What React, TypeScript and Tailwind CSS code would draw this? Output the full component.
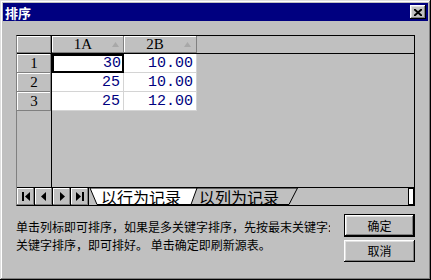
import React from "react";

const raised =
  "shadow-[inset_-1px_-1px_0_#808080,inset_1px_1px_0_#fff]";
const btnBevel =
  "shadow-[inset_-1px_-1px_0_#000,inset_1px_1px_0_#fff,inset_-2px_-2px_0_#808080,inset_2px_2px_0_#dfdfdf]";

const cjk = "font-['SimSun','Noto_Sans_CJK_SC',sans-serif]";

const rows = [
  { n: "1", a: "30", b: "10.00" },
  { n: "2", a: "25", b: "10.00" },
  { n: "3", a: "25", b: "12.00" },
];

const SortArrow = () => (
  <svg width="7" height="5" viewBox="0 0 7 5" className="shrink-0">
    <polygon points="3.5,0 7,5 0,5" fill="#a8a8a8" />
  </svg>
);

const NavIcon = ({ kind }: { kind: "first" | "prev" | "next" | "last" }) => (
  <svg width="8" height="9" viewBox="0 0 8 9">
    {kind === "first" && (
      <>
        <rect x="0" y="0" width="2" height="9" fill="#000" />
        <polygon points="8,0 8,9 3,4.5" fill="#000" />
      </>
    )}
    {kind === "prev" && <polygon points="6,0 6,9 1,4.5" fill="#000" />}
    {kind === "next" && <polygon points="2,0 2,9 7,4.5" fill="#000" />}
    {kind === "last" && (
      <>
        <polygon points="0,0 0,9 5,4.5" fill="#000" />
        <rect x="6" y="0" width="2" height="9" fill="#000" />
      </>
    )}
  </svg>
);

export default function App() {
  return (
    <div
      className={`w-[431px] h-[280px] bg-[#c0c0c0] p-[3px] flex flex-col ${cjk} shadow-[inset_-1px_-1px_0_#000,inset_1px_1px_0_#dfdfdf,inset_-2px_-2px_0_#808080,inset_2px_2px_0_#fff]`}
    >
      {/* Title bar */}
      <div className="h-[18px] bg-[#000080] flex items-center justify-between pl-[2px] pr-[2px]">
        <span className="text-white text-[13px] font-bold leading-none">排序</span>
        <button className={`w-[16px] h-[14px] bg-[#c0c0c0] flex items-center justify-center ${btnBevel}`}>
          <svg width="8" height="7" viewBox="0 0 8 7">
            <path d="M0 0 L8 7 M8 0 L0 7" stroke="#000" strokeWidth="2" />
          </svg>
        </button>
      </div>

      <div className="flex-1 flex flex-col px-[13px] pt-[14px]">
        {/* Grid */}
        <div className="h-[171px] flex flex-col border border-black border-l-[#808080]">
          {/* Header row */}
          <div className="h-[18px] flex border-b border-black shrink-0">
            <div className={`w-[35px] border-r border-black ${raised}`} />
            <div className={`w-[72px] flex items-center pr-[5px] ${raised}`}>
              <span className="flex-1 text-center pl-[2px] text-[15px] leading-none font-['Liberation_Serif',serif]">1A</span>
              <SortArrow />
            </div>
            <div className={`w-[73px] flex items-center pr-[6px] ${raised}`}>
              <span className="flex-1 text-center pl-[2px] text-[15px] leading-none font-['Liberation_Serif',serif]">2B</span>
              <SortArrow />
            </div>
            <div className="flex-1" />
          </div>

          {/* Body */}
          <div className="flex-1 flex min-h-0">
            <div className="w-[35px] border-r border-black flex flex-col">
              {rows.map((r) => (
                <div
                  key={r.n}
                  className={`h-[19px] flex items-center justify-center text-[15px] leading-none font-['Liberation_Serif',serif] ${raised}`}
                >
                  {r.n}
                </div>
              ))}
            </div>
            <div className="flex-1 flex flex-col">
              {rows.map((r, i) => (
                <div key={r.n} className="h-[19px] flex">
                  <div
                    className={`w-[72px] bg-white flex items-center justify-end text-[15px] leading-none text-[#000080] font-['Liberation_Mono',monospace] ${
                      i === 0 ? "border-2 border-black pr-[1px]" : "border-r border-b border-[#d4d4d4] pr-[3px]"
                    }`}
                  >
                    {r.a}
                  </div>
                  <div className="w-[73px] bg-white flex items-center justify-end pr-[3px] border-r border-b border-[#d4d4d4] text-[15px] leading-none text-[#000080] font-['Liberation_Mono',monospace]">
                    {r.b}
                  </div>
                </div>
              ))}
            </div>
          </div>

          {/* Tab bar */}
          <div className="h-[18px] flex border-t border-black shrink-0">
            {(["first", "prev", "next", "last"] as const).map((k) => (
              <div
                key={k}
                className={`w-[18px] flex items-center justify-center border-r border-black bg-[#c0c0c0] ${raised}`}
              >
                <NavIcon kind={k} />
              </div>
            ))}
            <div className="relative w-[209px] flex items-center text-[16px] leading-none">
              <svg className="absolute inset-0" width="209" height="17" viewBox="0 0 209 17">
                <polygon points="100,0 208.5,0 200,16.5 95,16.5" fill="#c0c0c0" stroke="#000" strokeWidth="1" />
                <polygon points="1,0 108,0 102,16.5 8,16.5" fill="#fff" stroke="#000" strokeWidth="1" />
              </svg>
              <span className="relative pl-[12px] w-[108px]">以行为记录</span>
              <span className="relative pl-[2px]">以列为记录</span>
            </div>
            <div className="flex-1" />
            <div className="w-[6px] bg-white border border-black" />
          </div>
        </div>

        {/* Bottom area */}
        <div className="flex justify-between mt-[8px]">
          <div className="w-[314px] overflow-hidden whitespace-nowrap text-[12px] leading-[18px] text-black mt-[4px]">
            <div>单击列标即可排序，如果是多关键字排序，先按最末关键字:</div>
            <div>关键字排序，即可排好。 单击确定即刷新源表。</div>
          </div>
          <div className="flex flex-col gap-[3px]">
            <button className="w-[71px] h-[23px] border border-black bg-[#c0c0c0] flex">
              <span className={`flex-1 flex items-center justify-center text-[12px] ${btnBevel}`}>确定</span>
            </button>
            <button className={`w-[71px] h-[22px] bg-[#c0c0c0] flex items-center justify-center text-[12px] ${btnBevel}`}>
              取消
            </button>
          </div>
        </div>
      </div>
    </div>
  );
}
